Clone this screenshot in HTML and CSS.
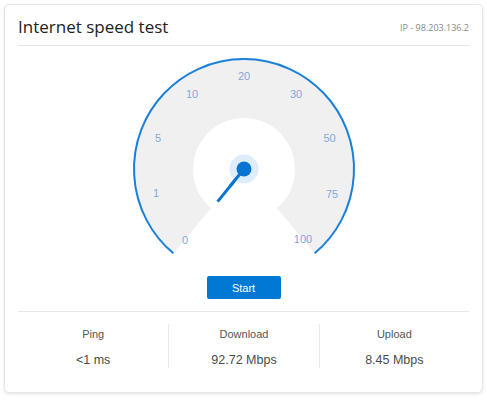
FILE: index.html
```html
<!DOCTYPE html>
<html>
<head>
<meta charset="utf-8">
<title>Internet speed test</title>
<link rel="stylesheet" href="styles.css">
</head>
<body>
<div class="card">
	<div class="head">
		<h1 class="title">Internet speed test</h1>
		<span class="ip">IP - 98.203.136.2</span>
	</div>
	<svg class="gauge" width="240" height="210" viewBox="0 0 240 210">
		<path class="band" d="M49.3 197.3 A110 110 0 1 1 190.7 197.3 L152.8 152.1 A51 51 0 1 0 87.2 152.1 Z"/>
		<path class="rim" d="M49.3 197.3 A110 110 0 1 1 190.7 197.3"/>
		<g class="ticks">
			<text x="61" y="183.5">0</text>
			<text x="32" y="137">1</text>
			<text x="34" y="81.5">5</text>
			<text x="68" y="37.5">10</text>
			<text x="120" y="20">20</text>
			<text x="172" y="37.5">30</text>
			<text x="205.5" y="81.5">50</text>
			<text x="208" y="138">75</text>
			<text x="179" y="183">100</text>
		</g>
		<line class="needle" x1="120" y1="113" x2="93.6" y2="145.6"/>
		<circle class="halo" cx="120" cy="113" r="14.5"/>
		<circle class="hub" cx="120" cy="113" r="7.5"/>
		<line class="needle" x1="120" y1="113" x2="106" y2="130.3"/>
	</svg>
	<div class="actions"><button class="start">Start</button></div>
	<div class="stats">
		<div class="stat">
			<div class="label">Ping</div>
			<div class="value">&lt;1 ms</div>
		</div>
		<div class="stat">
			<div class="label">Download</div>
			<div class="value">92.72 Mbps</div>
		</div>
		<div class="stat">
			<div class="label">Upload</div>
			<div class="value">8.45 Mbps</div>
		</div>
	</div>
</div>
</body>
</html>
```
FILE: styles.css
```css
*{margin:0;padding:0;box-sizing:border-box;}
body{background:#fff;font-family:"Liberation Sans",Arial,sans-serif;}
.card{margin:4px;width:479px;height:389px;border:1px solid #e6e6e6;border-radius:5px;box-shadow:0 1px 3px rgba(0,0,0,.12);padding:8px 13px 24px;display:flex;flex-direction:column;}
.head{display:flex;justify-content:space-between;align-items:center;height:33px;padding-bottom:4px;border-bottom:1px solid #e5e5e5;}
.title{font-family:"Open Sans","Noto Sans",sans-serif;font-weight:normal;font-size:17px;color:#222;line-height:28px;}
.ip{font-family:"Open Sans","Noto Sans",sans-serif;font-size:9px;color:#888;}
.gauge{display:block;margin:10px auto 0;}
.band{fill:#f0f0f0;}
.rim{fill:none;stroke:#1a80da;stroke-width:2;}
.ticks text{font-family:"Liberation Sans",Arial,sans-serif;font-size:11px;fill:#80a9d8;text-anchor:middle;dominant-baseline:central;}
.needle{stroke:#0a74d2;stroke-width:3;}
.halo{fill:#deedfb;}
.hub{fill:#0a74d2;}
.actions{display:flex;justify-content:center;margin-top:10px;padding-bottom:12px;border-bottom:1px solid #e8e8e8;}
.start{width:74px;height:23px;background:#0078d4;color:#fff;border:none;border-radius:2px;font-family:"Liberation Sans",Arial,sans-serif;font-size:11px;}
.stats{display:grid;grid-template-columns:1fr 1fr 1fr;margin-top:12px;}
.stat{text-align:center;padding-top:3px;height:44px;}
.stat+.stat{border-left:1px solid #e8e8e8;}
.label{font-size:11px;line-height:14px;color:#555;}
.value{font-size:12.5px;line-height:16px;color:#4a4a4a;margin-top:11px;}
```
